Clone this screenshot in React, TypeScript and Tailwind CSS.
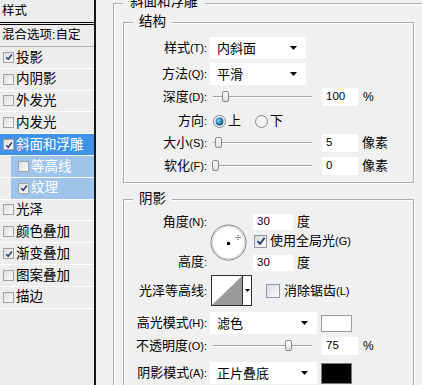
import React from 'react';

const font = "font-['Liberation_Sans','Noto_Sans_CJK_SC',sans-serif]";

const layerStyles = [
  { name: '投影', checked: true },
  { name: '内阴影' },
  { name: '外发光' },
  { name: '内发光' },
  { name: '斜面和浮雕', checked: true, active: true },
  { name: '等高线', sub: true },
  { name: '纹理', checked: true, sub: true },
  { name: '光泽' },
  { name: '颜色叠加' },
  { name: '渐变叠加', checked: true },
  { name: '图案叠加' },
  { name: '描边' },
];

function Tick({ className = 'w-[8px] h-[8px]' }: { className?: string }) {
  return (
    <svg viewBox="0 0 10 10" className={className}>
      <path d="M1.5 5.2 L4 7.8 L8.6 1.8" fill="none" stroke="#2b3f6b" strokeWidth="1.9" />
    </svg>
  );
}

function SmallBox({ on }: { on?: boolean }) {
  return (
    <span className="inline-flex items-center justify-center w-[11px] h-[11px] shrink-0 border border-[#a3a3a3] bg-gradient-to-br from-[#dedede] to-[#fafafa]">
      {on && <Tick />}
    </span>
  );
}

function StyleList() {
  return (
    <div className="w-[96px] shrink-0 border-r-2 border-[#161616] bg-[#ededed] flex flex-col text-[13.5px]">
      <div className="h-[22px] flex items-center pl-[2px] text-[12.5px]">样式</div>
      <div className="h-[3px] border-y border-black" />
      <div className="h-[22px] flex items-center pl-[2px] border-b border-[#b4b4b4] text-[12.5px] whitespace-nowrap">
        混合选项:自定
      </div>
      {layerStyles.map((s) => (
        <div key={s.name} className={`h-[21.8px] flex border-b border-white ${s.sub ? 'pl-[11px]' : ''}`}>
          <div
            className={`flex-1 flex items-center gap-[2px] whitespace-nowrap ${
              s.active ? 'bg-[#3f92e6] text-white pl-[3px]' : s.sub ? 'bg-[#9fc4ec] text-white pl-[7px]' : 'pl-[3px]'
            }`}
          >
            <SmallBox on={s.checked} />
            <span className="leading-none">{s.name}</span>
          </div>
        </div>
      ))}
    </div>
  );
}

function Label({ text, hot }: { text: string; hot?: string }) {
  return (
    <div className="w-[83px] shrink-0 text-right text-[13px] leading-[16px] whitespace-nowrap">
      {text}
      <span className="text-[11px]">{hot ? `(${hot}):` : ':'}</span>
    </div>
  );
}

function Row({ label, hot, className, children }: { label: string; hot?: string; className: string; children: React.ReactNode }) {
  return (
    <div className={`flex items-center ${className}`}>
      <Label text={label} hot={hot} />
      <div className="ml-[3px] flex items-center">{children}</div>
    </div>
  );
}

function Caret() {
  return (
    <svg width="7" height="4" viewBox="0 0 7 4" className="shrink-0">
      <polygon points="0,0 7,0 3.5,4" fill="#000" />
    </svg>
  );
}

function Select({ value, w }: { value: string; w: string }) {
  return (
    <div className={`flex items-center h-[22px] bg-white pl-[7px] pr-[9px] ${w}`}>
      <span className="flex-1 text-[13px] leading-none">{value}</span>
      <Caret />
    </div>
  );
}

function Slider({ thumb }: { thumb: string }) {
  return (
    <div className="relative w-[102px] h-[18px] shrink-0">
      <div className="absolute left-[3px] right-0 top-[8px] h-[2px] border-t border-[#a5a5a5] border-b border-b-white" />
      <div className={`absolute top-[3px] w-[7px] h-[11px] rounded-[2px] border border-[#8b8b8b] bg-gradient-to-b from-white to-[#dcdcdc] ${thumb}`} />
    </div>
  );
}

function NumBox({ v, w = 'w-[36px]', h = 'h-[18px]', className = 'ml-[10px]' }: { v: string; w?: string; h?: string; className?: string }) {
  return (
    <div className={`flex items-center bg-white pl-[4px] text-[11.5px] shrink-0 ${w} ${h} ${className}`}>{v}</div>
  );
}

function Radio({ on }: { on?: boolean }) {
  return (
    <svg width="13" height="13" viewBox="0 0 13 13" className="shrink-0">
      {on && (
        <defs>
          <radialGradient id="rdot" cx="40%" cy="40%" r="65%">
            <stop offset="0" stopColor="#8ad6f2" />
            <stop offset="0.55" stopColor="#2a86bd" />
            <stop offset="1" stopColor="#0d3d63" />
          </radialGradient>
        </defs>
      )}
      <circle cx="6.5" cy="6.5" r="6" fill="#f3f3f3" stroke="#7d8790" />
      {on && <circle cx="6.5" cy="6.5" r="3.9" fill="url(#rdot)" />}
    </svg>
  );
}

function Check({ on, size }: { on?: boolean; size: string }) {
  return (
    <span className={`inline-flex items-center justify-center shrink-0 border border-[#8e9aab] bg-gradient-to-br from-[#d9d9d9] to-white ${size}`}>
      {on && <Tick className="w-[10px] h-[10px]" />}
    </span>
  );
}

function Dial() {
  return (
    <svg width="37" height="37" viewBox="0 0 37 37" className="ml-[3px] mt-[10px] shrink-0">
      <circle cx="18.5" cy="18.5" r="17.5" fill="#fff" stroke="#767676" />
      <circle cx="18.5" cy="18.5" r="16.2" fill="none" stroke="#dadada" strokeWidth="1.4" />
      <rect x="17" y="18" width="3" height="3" fill="#000" />
      <path d="M25.5 13.5 H30.5 M28 11 V16" stroke="#333" strokeWidth="1" strokeDasharray="1 1" />
    </svg>
  );
}

function Contour() {
  return (
    <svg width="41" height="31" viewBox="0 0 41 31" className="ml-[4px] shrink-0">
      <rect x="0.5" y="0.5" width="40" height="30" fill="#fff" stroke="#2e2e2e" />
      <polygon points="1,30 31,1 31,30" fill="#9a9a9a" />
      <line x1="31.5" y1="0" x2="31.5" y2="31" stroke="#2e2e2e" />
      <polygon points="34,14 39,14 36.5,17" fill="#000" />
    </svg>
  );
}

function Group({ title, className, children }: { title: string; className: string; children: React.ReactNode }) {
  return (
    <div className={`relative w-[291px] border border-[#acacac] shadow-[inset_1px_1px_0_#fff,1px_1px_0_#fff] ${className}`}>
      <span className="absolute left-[9px] top-[-9px] px-[6px] bg-[#f0f0f0] text-[13.5px] leading-[16px]">{title}</span>
      {children}
    </div>
  );
}

export default function App() {
  return (
    <div className={`flex w-[422px] h-[385px] overflow-hidden bg-[#f0f0f0] text-black ${font}`}>
      <StyleList />

      <div className="flex-1 pl-[17px] pt-[3px]">
        <div className="relative h-[430px] border-l border-t border-[#acacac] shadow-[inset_1px_1px_0_#fff] pl-[9px] pt-[18px]">
          <span className="absolute left-[9px] top-[-10px] px-[7px] bg-[#f0f0f0] text-[13.5px] leading-[16px]">斜面和浮雕</span>

          {/* 结构 */}
          <Group title="结构" className="h-[161px]">
            <div className="flex flex-col pt-[14px]">
              <Row label="样式" hot="T" className="h-[22px]">
                <Select value="内斜面" w="w-[96px]" />
              </Row>
              <Row label="方法" hot="Q" className="mt-[4px] h-[22px]">
                <Select value="平滑" w="w-[96px]" />
              </Row>
              <Row label="深度" hot="D" className="mt-[3px] h-[18px]">
                <Slider thumb="left-[12px]" />
                <NumBox v="100" />
                <span className="ml-[5px] text-[12px]">%</span>
              </Row>
              <Row label="方向" className="mt-[4px] h-[22px]">
                <div className="ml-[3px] flex items-center text-[13px]">
                  <Radio on />
                  <span className="ml-[2px]">上</span>
                </div>
                <div className="ml-[14px] flex items-center text-[13px]">
                  <Radio />
                  <span className="ml-[2px]">下</span>
                </div>
              </Row>
              <Row label="大小" hot="S" className="mt-[2px] h-[18px]">
                <Slider thumb="left-[5px]" />
                <NumBox v="5" />
                <span className="ml-[4px] text-[13px]">像素</span>
              </Row>
              <Row label="软化" hot="F" className="mt-[5px] h-[18px]">
                <Slider thumb="left-[2px]" />
                <NumBox v="0" />
                <span className="ml-[4px] text-[13px]">像素</span>
              </Row>
            </div>
          </Group>

          {/* 阴影 */}
          <Group title="阴影" className="mt-[16px] h-[230px]">
            <div className="flex flex-col pt-[14px]">
              <div className="flex">
                <div className="flex flex-col">
                  <Label text="角度" hot="N" />
                  <div className="mt-[24px]">
                    <Label text="高度" />
                  </div>
                </div>
                <Dial />
                <div className="ml-[6px] flex flex-col">
                  <div className="flex items-center h-[16px]">
                    <NumBox v="30" w="w-[40px]" h="h-[16px]" className="" />
                    <span className="ml-[4px] text-[13px]">度</span>
                  </div>
                  <div className="flex items-center h-[20px] mt-[1px] text-[13px] whitespace-nowrap">
                    <span className="ml-[1px] flex">
                      <Check on size="w-[13px] h-[13px]" />
                    </span>
                    <span className="ml-[3px]">
                      使用全局光<span className="text-[11px]">(G)</span>
                    </span>
                  </div>
                  <div className="flex items-center h-[16px] mt-[4px]">
                    <NumBox v="30" w="w-[40px]" h="h-[16px]" className="" />
                    <span className="ml-[4px] text-[13px]">度</span>
                  </div>
                </div>
              </div>

              <div className="flex items-center mt-[4px] h-[31px]">
                <Label text="光泽等高线" />
                <Contour />
                <span className="ml-[14px] flex">
                  <Check size="w-[14px] h-[14px]" />
                </span>
                <span className="ml-[4px] text-[13px] whitespace-nowrap">
                  消除锯齿<span className="text-[11px]">(L)</span>
                </span>
              </div>

              <Row label="高光模式" hot="H" className="mt-[6px] h-[22px]">
                <Select value="滤色" w="w-[107px]" />
                <div className="ml-[4px] w-[31px] h-[17px] bg-white border border-[#9c9c9c]" />
              </Row>
              <Row label="不透明度" hot="O" className="mt-[3px] h-[18px]">
                <Slider thumb="left-[75px]" />
                <NumBox v="75" />
                <span className="ml-[5px] text-[12px]">%</span>
              </Row>
              <Row label="阴影模式" hot="A" className="mt-[7px] h-[22px]">
                <Select value="正片叠底" w="w-[107px]" />
                <div className="ml-[4px] w-[31px] h-[21px] bg-black border border-[#7a7a7a]" />
              </Row>
            </div>
          </Group>
        </div>
      </div>
    </div>
  );
}
